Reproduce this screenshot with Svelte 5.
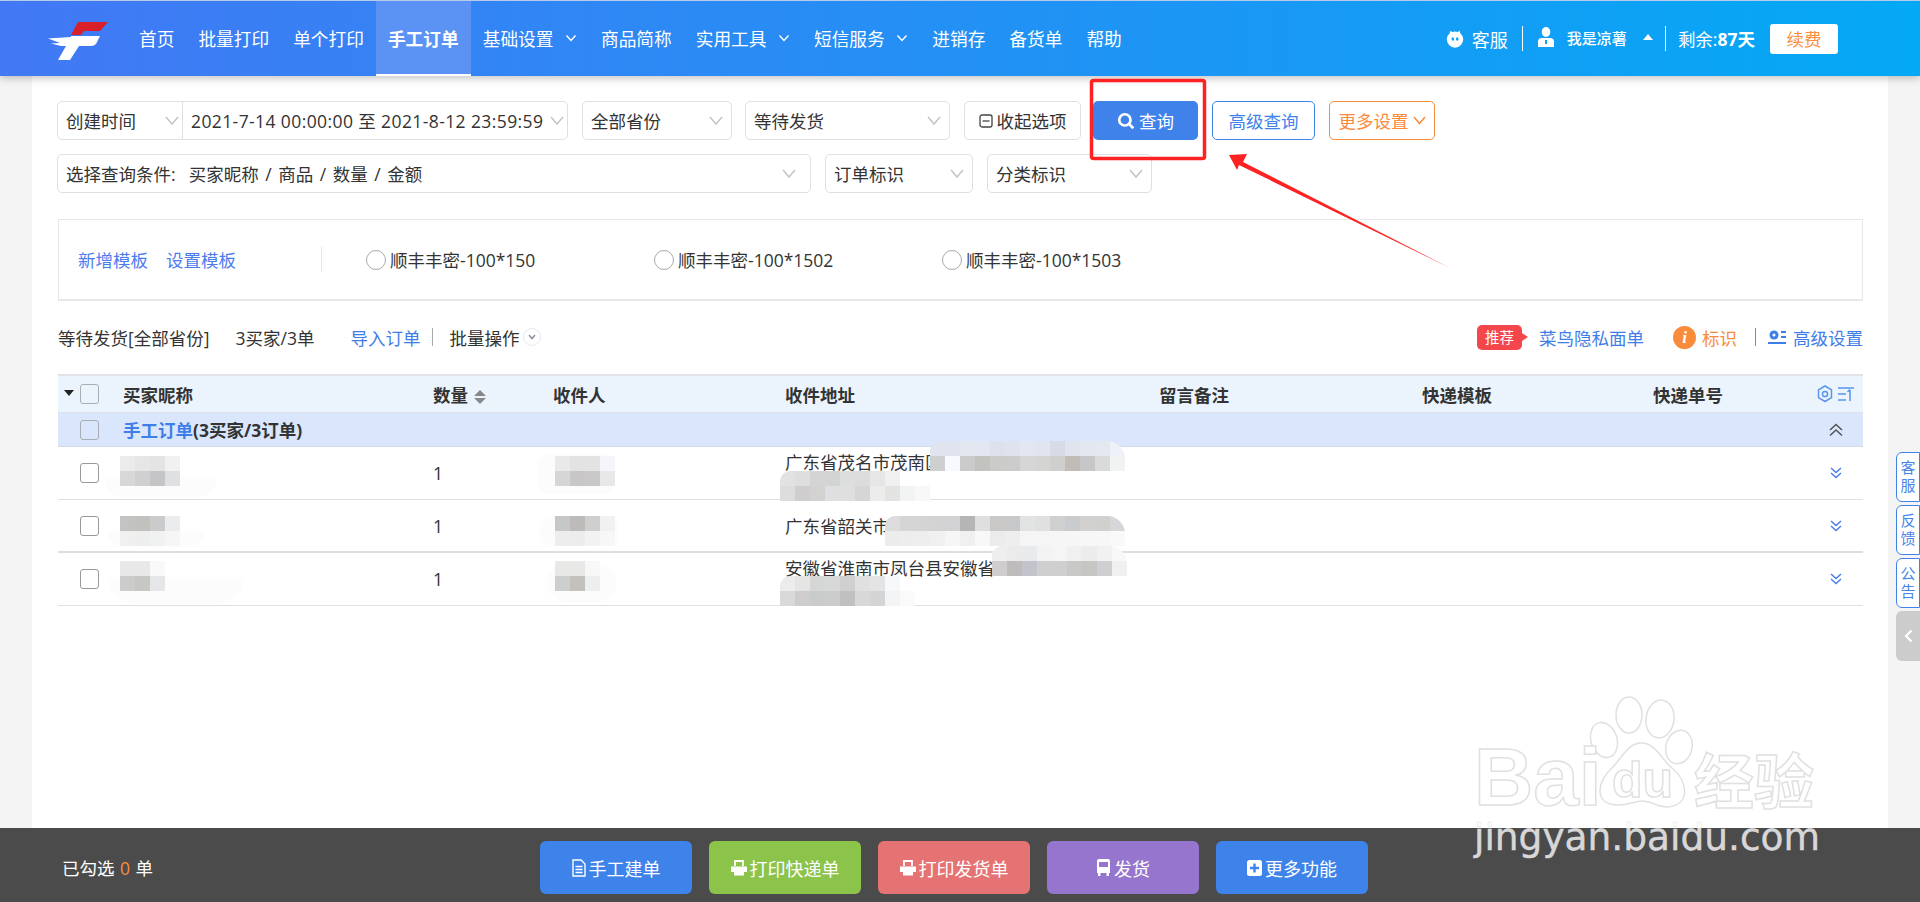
<script>
  const nav = [
    { label: "首页" },
    { label: "批量打印" },
    { label: "单个打印" },
    { label: "手工订单", active: true },
    { label: "基础设置", more: true },
    { label: "商品简称" },
    { label: "实用工具", more: true },
    { label: "短信服务", more: true },
    { label: "进销存" },
    { label: "备货单" },
    { label: "帮助" }
  ];

  const templates = ["顺丰丰密-100*150", "顺丰丰密-100*1502", "顺丰丰密-100*1503"];

  const columns = ["买家昵称", "数量", "收件人", "收件地址", "留言备注", "快递模板", "快递单号"];

  const rows = [
    { addr: "广东省茂名市茂南区", tall: true },
    { addr: "广东省韶关市" },
    { addr: "安徽省淮南市凤台县安徽省", tall: true }
  ];

  // faint smudges left round the pixelated blocks
  const smudges = [
    { x: 46, y: 30, w: 113, h: 20, r: "0 0 40px 40px" },
    { x: 50, y: 84, w: 96, h: 16, r: "0 0 16px 16px" },
    { x: 50, y: 130, w: 136, h: 27, r: "0 0 30px 30px" },
    { x: 479, y: 7, w: 78, h: 40, r: "14px" },
    { x: 482, y: 69, w: 78, h: 30, r: "10px" },
    { x: 489, y: 117, w: 70, h: 38, r: "20px" }
  ];

  // pixelated privacy blocks, x/y relative to the table body
  const mosaics = [
    { x: 62, y: 9, cells: [["#ebebeb", "#e6e6e6", "#e4e4e4", "#f1f1f1"], ["#d7d7d5", "#d0d0d0", "#c5c5c7", "#dfe0e2"]] },
    { x: 62, y: 69, cells: [["#c3c3c1", "#c2c1be", "#cbcbcb", "#ebecee"], ["#f0f0ef", "#eeeeee", "#f0f1f1", "#f6f6f6"]] },
    { x: 62, y: 114, cells: [["#e9e8e8", "#e8e8e7", "#f9f9f9"], ["#ccccca", "#c7c7c4", "#e5e6e8"]] },
    { x: 497, y: 9, cells: [["#e9e9e9", "#e3e3e3", "#e3e3e3", "#f4f6f9"], ["#d6d6d6", "#c8c6c6", "#c8c8c8", "#e8e8e8"]] },
    { x: 497, y: 69, cells: [["#c6c7c7", "#bdbbb9", "#cfcfcf", "#f0f1f3"], ["#ededed", "#ececec", "#f2f2f2", "#f6f7f7"]] },
    { x: 497, y: 114, cells: [["#e8e8e6", "#e8e8e6", "#f8f8f8"], ["#cdcfce", "#c2c1be", "#eceef0"]] },
    {
      x: 872, y: -6, round: true,
      cells: [
        ["#e0e4ee", "#e0e4ee", "#e2e6ef", "#e2e6f0", "#dde1ec", "#dfe3ed", "#e3e7f1", "#e1e5ef", "#d6dbe7", "#e0e4ee", "#e2e6ef", "#e4e8f1", "#eef1f8"],
        ["#cfcfcf", "#f6fafe", "#cbcbcb", "#c2c2be", "#cbcbca", "#cbcccb", "#d6d6d6", "#d4d4d2", "#cfd0ce", "#bfbdb6", "#c7c7ca", "#d9dbda", "#f0f3f2"]
      ]
    },
    {
      x: 722, y: 24, round: true,
      cells: [
        ["#e2e2e2", "#dedede", "#d4d4d4", "#d2d4d4", "#dcdddd", "#dcdcdc", "#e6e6e6", "#f0f0f0", "#fff", "#fff"],
        ["#dddddd", "#cfcdcd", "#d2d2d1", "#dedfe0", "#dfdfdf", "#d6d6d6", "#ececec", "#e3e4e2", "#f2f3f3", "#f8f8f8"]
      ]
    },
    {
      x: 827, y: 69, round: true,
      cells: [
        ["#dcdcdc", "#d5d5d5", "#d4d4d4", "#d3d3d3", "#d2d2d4", "#b5b5b5", "#dfdfdf", "#c9c8c7", "#c7c8ca", "#e2e4e4", "#e0e0e0", "#cfd0d0", "#c9cbce", "#d2d1cf", "#d0d0ce", "#d6d7d9"],
        ["#ececec", "#ededed", "#eeeeee", "#f0f0f0", "#f6f6f6", "#f0f0f0", "#f8f8f8", "#ebebeb", "#eeeeee", "#f5f5f5", "#f5f5f5", "#f6f6f6", "#f6f6f6", "#f7f7f7", "#f7f7f7", "#f9f9f9"]
      ]
    },
    {
      x: 934, y: 99, round: true,
      cells: [
        ["#efeeee", "#ebebeb", "#e9eaec", "#f3f3f3", "#f5f5f5", "#f0f0f0", "#ececec", "#f1f1f1", "#f8f8f8"],
        ["#cfcdcd", "#bfbcbd", "#c3c3cb", "#cfcfcf", "#cfcfcf", "#c8c8c6", "#c6c6c4", "#cfcfd1", "#eff1f1"]
      ]
    },
    {
      x: 722, y: 129, round: true,
      cells: [
        ["#ececec", "#e5e5e4", "#d5d7d6", "#d8d8d6", "#d0d0d0", "#e0e0e0", "#e4e4e4", "#f6f8fa", "#fff"],
        ["#d9d9d9", "#cecccc", "#cacccb", "#cccccc", "#bfc0c2", "#d8d8d8", "#d4d4d4", "#f2f4f6", "#fafafa"]
      ]
    }
  ];

  const actions = [
    { label: "手工建单", tone: "blue", icon: "doc" },
    { label: "打印快递单", tone: "green", icon: "print" },
    { label: "打印发货单", tone: "red", icon: "print" },
    { label: "发货", tone: "purple", icon: "bus" },
    { label: "更多功能", tone: "blue", icon: "plus" }
  ];
</script>

<div class="page">
  <header class="topbar">
    <svg class="logo" width="62" height="40" viewBox="0 0 62 40">
      <path d="M31 0H61L53 9H37L34 13H24Z" fill="#d9202a" />
      <path d="M24 14H53L49 22Q47 24 44 24H32L23 38H11L19 24H14L4 21.5L13 21L1 16.5L24 15Z" fill="#fff" />
    </svg>
    <nav class="nav">
      {#each nav as item}
        <a class="nav-item" class:active={item.active}>
          {item.label}
          {#if item.more}
            <svg class="nav-caret" width="12" height="8" viewBox="0 0 12 8"><path d="M1.5 1.5 6 6.5l4.5-5" fill="none" stroke="#fff" stroke-width="1.4" /></svg>
          {/if}
        </a>
      {/each}
    </nav>
    <div class="account">
      <svg width="18" height="18" viewBox="0 0 18 18">
        <path d="M9 1.500c1 0 2 .2 2.800.5L13.500.8l.8 2.400A8.200 8.200 0 1 1 3.700 3.200L4.500.8 6.200 2C7 1.700 8 1.500 9 1.500Z" fill="#fff" />
        <ellipse cx="6.800" cy="9" rx="1.300" ry="1.800" fill="#0ba4f4" /><ellipse cx="11.200" cy="9" rx="1.300" ry="1.800" fill="#0ba4f4" />
      </svg>
      <span class="kefu">客服</span>
      <i class="vline"></i>
      <svg class="person" width="16" height="20" viewBox="0 0 16 20">
        <ellipse cx="8" cy="5" rx="4.300" ry="5" fill="#fff" />
        <path d="M0 20v-5.500Q0 11 4 11h8q4 0 4 3.500V20Z" fill="#fff" />
        <path d="M7 13h2v4H7Z" fill="#0ba4f4" />
      </svg>
      <span class="uname">我是凉薯</span>
      <span class="up-tri"></span>
      <i class="vline second"></i>
      <span class="remain">剩余:<b>87天</b></span>
      <button class="renew">续费</button>
    </div>
  </header>

  <main class="main">
    <div class="filters">
      <div class="select date">
        <span class="date-type">创建时间
          <svg class="caret" width="14" height="9" viewBox="0 0 14 9"><path d="M1 1l6 7 6-7" fill="none" stroke="#c4c4c4" stroke-width="1.500" /></svg>
        </span>
        <span class="date-range">2021-7-14 00:00:00 至 2021-8-12 23:59:59
          <svg class="caret" width="14" height="9" viewBox="0 0 14 9"><path d="M1 1l6 7 6-7" fill="none" stroke="#c4c4c4" stroke-width="1.500" /></svg>
        </span>
      </div>
      <div class="select w150">全部省份<svg class="caret" width="14" height="9" viewBox="0 0 14 9"><path d="M1 1l6 7 6-7" fill="none" stroke="#c4c4c4" stroke-width="1.500" /></svg></div>
      <div class="select w205">等待发货<svg class="caret" width="14" height="9" viewBox="0 0 14 9"><path d="M1 1l6 7 6-7" fill="none" stroke="#c4c4c4" stroke-width="1.500" /></svg></div>
      <button class="btn collapse">
        <svg width="14" height="14" viewBox="0 0 14 14"><rect x="1" y="1" width="12" height="12" rx="2" fill="none" stroke="#444" stroke-width="1.300" /><path d="M3.500 7h7" stroke="#444" stroke-width="1.300" /></svg>
        收起选项
      </button>
      <button class="btn primary">
        <svg width="18" height="18" viewBox="0 0 16 16"><circle cx="7" cy="7" r="5" fill="none" stroke="#fff" stroke-width="2.400" /><path d="M10.500 10.500 14.500 14.500" stroke="#fff" stroke-width="2.400" /></svg>
        查询
      </button>
      <button class="btn outline">高级查询</button>
      <button class="btn orange">更多设置<svg width="13" height="9" viewBox="0 0 13 9"><path d="M1 1l5.500 6.500L12 1" fill="none" stroke="#f98c3a" stroke-width="1.500" /></svg></button>
    </div>
    <div class="filters second-row">
      <div class="select w753">选择查询条件:&nbsp; 买家昵称 / 商品 / 数量 / 金额<svg class="caret" width="14" height="9" viewBox="0 0 14 9"><path d="M1 1l6 7 6-7" fill="none" stroke="#c4c4c4" stroke-width="1.500" /></svg></div>
      <div class="select w148">订单标识<svg class="caret" width="14" height="9" viewBox="0 0 14 9"><path d="M1 1l6 7 6-7" fill="none" stroke="#c4c4c4" stroke-width="1.500" /></svg></div>
      <div class="select w165">分类标识<svg class="caret" width="14" height="9" viewBox="0 0 14 9"><path d="M1 1l6 7 6-7" fill="none" stroke="#c4c4c4" stroke-width="1.500" /></svg></div>
    </div>

    <section class="templates">
      <div class="tpl-links">
        <a>新增模板</a>
        <a>设置模板</a>
      </div>
      <div class="tpl-list">
        {#each templates as name}
          <label class="radio"><span class="dot"></span>{name}</label>
        {/each}
      </div>
    </section>

    <div class="status">
      <span class="s-where">等待发货[全部省份]</span>
      <span class="s-count">3买家/3单</span>
      <a class="s-import">导入订单</a>
      <i class="s-sep"></i>
      <span class="s-batch">批量操作</span>
      <span class="s-chev"><svg width="8" height="6" viewBox="0 0 8 6"><path d="M1 1l3 3.500L7 1" fill="none" stroke="#8a8fa0" stroke-width="1.500" /></svg></span>
      <div class="s-right">
        <span class="badge">推荐</span>
        <a class="s-cainiao">菜鸟隐私面单</a>
        <span class="info">i</span>
        <a class="s-mark">标识</a>
        <i class="s-sep dark"></i>
        <svg class="s-cog" width="18" height="16" viewBox="0 0 18 16">
          <circle cx="6" cy="6" r="4.500" fill="#3f7ee8" /><circle cx="6" cy="6" r="1.500" fill="#fff" />
          <path d="M0 14h18M13 3h5M13 8h5" stroke="#3f7ee8" stroke-width="2" />
        </svg>
        <a class="s-adv">高级设置</a>
      </div>
    </div>

    <div class="table">
      <div class="grid thead">
        <div class="check-cell">
          <span class="tri"></span>
          <span class="box"></span>
        </div>
        {#each columns as col, i}
          <div>
            {col}
            {#if i === 1}
              <span class="sort"><i class="s-up"></i><i class="s-down"></i></span>
            {/if}
          </div>
        {/each}
        <div class="head-tools">
          <svg width="18" height="18" viewBox="0 0 18 18"><path d="M9 1l6.500 3.800v7.900L9 16.500 2.500 12.700V4.800Z" fill="none" stroke="#5a93ea" stroke-width="1.500" stroke-linejoin="round" /><circle cx="9" cy="9" r="2.600" fill="none" stroke="#5a93ea" stroke-width="1.500" /></svg>
          <svg width="16" height="16" viewBox="0 0 16 16"><path d="M0 2h16M0 8h8M0 14h8M12 15V4M9.500 6 12 3.500" fill="none" stroke="#5a93ea" stroke-width="1.500" /></svg>
        </div>
      </div>
      <div class="grid group">
        <div class="check-cell"><span class="box"></span></div>
        <div class="group-title"><span>手工订单</span>(3买家/3订单)</div>
        <div class="group-fold">
          <svg width="16" height="14" viewBox="0 0 16 14"><path d="M2 7l6-5.500L14 7M2 12.500 8 7l6 5.500" fill="none" stroke="#555" stroke-width="1.600" /></svg>
        </div>
      </div>
      <div class="tbody">
        {#each rows as row, i}
          <div class="grid trow" class:thick={i === 1}>
            <div class="check-cell"><span class="box"></span></div>
            <div></div>
            <div>1</div>
            <div></div>
            <div class="addr" class:tall={row.tall}>{row.addr}</div>
            <div></div>
            <div></div>
            <div></div>
            <div class="row-fold">
              <svg width="12" height="12" viewBox="0 0 12 12"><path d="M1 1l5 4.500L11 1M1 6l5 4.500L11 6" fill="none" stroke="#4d7cf0" stroke-width="1.500" /></svg>
            </div>
          </div>
        {/each}
        {#each smudges as s}
          <div class="smudge" style="left:{s.x}px;top:{s.y}px;width:{s.w}px;height:{s.h}px;border-radius:{s.r}"></div>
        {/each}
        {#each mosaics as m}
          <div class="mosaic" class:round={m.round} style="left:{m.x}px;top:{m.y}px">
            {#each m.cells as line}
              <div class="mosaic-line">
                {#each line as c}<i style="background:{c}"></i>{/each}
              </div>
            {/each}
          </div>
        {/each}
      </div>
    </div>
  </main>

  <footer class="footer">
    <div class="picked">已勾选 <b>0</b> 单</div>
    <div class="actions">
      {#each actions as a}
        <button class="action {a.tone}">
          {#if a.icon === "doc"}
            <svg width="14" height="18" viewBox="0 0 14 18"><path d="M1 1h8l4 4v12H1Z" fill="none" stroke="#fff" stroke-width="1.400" /><path d="M3.500 7.500h7M3.500 10.500h7M3.500 13.500h7" stroke="#fff" stroke-width="1.600" /></svg>
          {:else if a.icon === "print"}
            <svg width="16" height="16" viewBox="0 0 16 16"><path d="M4 6V1h8v5" fill="none" stroke="#fff" stroke-width="1.800" /><path d="M0 6.500h16V12h-3v3.500H3V12H0Z" fill="#fff" /></svg>
          {:else if a.icon === "bus"}
            <svg width="15" height="19" viewBox="0 0 15 19"><path d="M1 3Q1 1 3 1h9q2 0 2 2v12H1Z" fill="#fff" /><path d="M3 4h9v5H3Z" fill="#9575cd" /><path d="M2 15h2.500v3H2ZM10.500 15H13v3h-2.500Z" fill="#fff" /></svg>
          {:else}
            <svg width="15" height="16" viewBox="0 0 15 16"><rect width="15" height="16" rx="2.500" fill="#fff" /><path d="M7.500 3.500v9M3 8h9" stroke="#3e83ea" stroke-width="2.400" /></svg>
          {/if}
          {a.label}
        </button>
      {/each}
    </div>
  </footer>

  <aside class="side">
    <a>客<br />服</a>
    <a>反<br />馈</a>
    <a>公<br />告</a>
    <span class="side-toggle"><svg width="9" height="14" viewBox="0 0 9 14"><path d="M7.500 1.500 2 7l5.500 5.500" fill="none" stroke="#fff" stroke-width="2.200" /></svg></span>
  </aside>

  <!-- red annotation drawn over the query button -->
  <svg class="mark" width="1920" height="902" viewBox="0 0 1920 902">
    <rect x="1091.500" y="80.500" width="113" height="78" rx="2" fill="none" stroke="#fe2222" stroke-width="3.500" />
    <path d="M1229 155 1247 154 1243 162 1450 268 1239 165 1237 170Z" fill="#fe2222" />
  </svg>

  <!-- watermark -->
  <svg class="mark" width="1920" height="902" viewBox="0 0 1920 902">
    <g fill="#fff" fill-opacity="0.7" stroke="#e0e0e0" stroke-width="1.500">
      <ellipse cx="1604" cy="740" rx="13" ry="18" transform="rotate(-18 1604 740)" />
      <ellipse cx="1629" cy="715" rx="13" ry="18" />
      <ellipse cx="1660" cy="719" rx="14" ry="19" transform="rotate(8 1660 719)" />
      <ellipse cx="1679" cy="747" rx="13" ry="17" transform="rotate(14 1679 747)" />
      <path d="M1641 743C1628 743 1622 758 1612 768 1596 782 1594 805 1618 805 1630 805 1634 801 1642 801 1652 801 1656 807 1668 807 1690 805 1689 782 1672 768 1660 758 1656 743 1641 743Z" />
    </g>
    <g font-family="'Liberation Sans', sans-serif" font-weight="700" fill="#fff" stroke="#e0e0e0" stroke-width="1.500">
      <text x="1474" y="805" font-size="82">Bai</text>
      <text x="1612" y="797" font-size="50">du</text>
      <text x="1694" y="804" font-size="60" font-family="'Noto Sans CJK SC', sans-serif">经验</text>
    </g>
    <text x="1474" y="850" font-size="37.500" font-family="'DejaVu Sans', sans-serif" fill="#fff" fill-opacity="0.8" stroke="#dcdcdc" stroke-width="0.400">jingyan.baidu.com</text>
  </svg>
</div>

<style>
  :global(body) {
    margin: 0;
    background: #f4f4f4;
  }
  .page {
    position: relative;
    display: flex;
    flex-direction: column;
    height: 902px;
    overflow: hidden;
    font-family: "Open Sans", "Noto Sans CJK SC", sans-serif;
    font-size: 17.500px;
    color: #333;
  }
  a {
    text-decoration: none;
    cursor: pointer;
  }
  button {
    font: inherit;
    cursor: pointer;
  }
  i {
    font-style: normal;
  }

  .topbar {
    position: relative;
    z-index: 2;
    flex: none;
    display: flex;
    align-items: stretch;
    box-sizing: border-box;
    height: 76px;
    padding-left: 47px;
    background: linear-gradient(90deg, #4278f4, #04a9f5);
    border-top: 1px solid #b9cbea;
    box-shadow: 0 2px 8px rgba(0, 0, 0, 0.25);
    color: #fff;
  }
  .logo {
    margin: 21px 18px 0 0;
    flex: none;
  }
  .nav {
    display: flex;
    font-size: 17.700px;
  }
  .nav-item {
    display: flex;
    align-items: center;
    box-sizing: border-box;
    padding: 0 12px 2px;
    color: #fff;
    white-space: nowrap;
  }
  .nav-item.active {
    background: #5b93f5;
    border-bottom: 2px solid #fff;
    padding-bottom: 0;
    font-weight: 700;
  }
  .nav-caret {
    margin-left: 11.500px;
  }
  .account {
    display: flex;
    align-items: center;
    margin-left: auto;
    padding-right: 82px;
  }
  .kefu {
    margin-left: 8px;
    font-size: 18px;
  }
  .vline {
    width: 1px;
    height: 25px;
    background: #fff;
    margin: 0 15px 0 14px;
  }
  .vline.second {
    margin: 0 12px;
  }
  .person {
    margin-bottom: 4px;
  }
  .uname {
    margin-left: 13px;
    font-size: 15px;
    font-weight: 500;
    margin-bottom: 3px;
  }
  .up-tri {
    width: 0;
    height: 0;
    margin: 0 0 4px 16px;
    border: 5.500px solid transparent;
    border-top: 0;
    border-bottom: 6px solid #fff;
  }
  .remain {
    white-space: nowrap;
  }
  .remain b {
    font-weight: 700;
  }
  .renew {
    width: 68px;
    height: 30px;
    margin-left: 15px;
    padding: 0;
    border: 0;
    border-radius: 3px;
    background: #fff;
    color: #f9913c;
  }

  .main {
    flex: 1;
    min-height: 0;
    margin: 0 32px;
    padding: 25px 25px 0 26px;
    background: #fff;
  }
  .filters {
    display: flex;
    gap: 14px;
    height: 39px;
    margin-left: -1px;
  }
  .second-row {
    margin-top: 14px;
  }
  .select {
    display: flex;
    align-items: center;
    justify-content: space-between;
    box-sizing: border-box;
    padding: 0 8px;
    border: 1px solid #e0e0e0;
    border-radius: 5px;
    background: #fff;
    white-space: nowrap;
  }
  .caret {
    flex: none;
  }
  .date {
    width: 511px;
    padding: 0;
  }
  .date-type,
  .date-range {
    display: flex;
    align-items: center;
    justify-content: space-between;
    box-sizing: border-box;
    height: 100%;
  }
  .date-type {
    width: 125px;
    padding: 0 3px 0 8px;
    border-right: 1px solid #e0e0e0;
  }
  .date-range {
    flex: 1;
    padding: 0 3px 0 8px;
    letter-spacing: 0.400px;
  }
  .w150 { width: 150px; }
  .w205 { width: 205px; margin-left: -1px; }
  .w753 { width: 754px; padding-right: 14px; word-spacing: 2px; }
  .w148 { width: 148px; }
  .w165 { width: 165px; }

  .btn {
    display: flex;
    align-items: center;
    justify-content: center;
    gap: 4px;
    box-sizing: border-box;
    height: 39px;
    padding: 0;
    border-radius: 5px;
    background: #fff;
    white-space: nowrap;
  }
  .collapse {
    width: 117px;
    border: 1px solid #e0e0e0;
    color: #333;
  }
  .primary {
    width: 105px;
    margin-left: -2px;
    border: 0;
    background: #3f83ea;
    color: #fff;
  }
  .outline {
    width: 103px;
    border: 1px solid #3f83ea;
    color: #3f83ea;
  }
  .orange {
    width: 106px;
    border: 1px solid #f98c3a;
    color: #f98c3a;
  }

  .templates {
    display: flex;
    align-items: center;
    box-sizing: border-box;
    height: 82px;
    margin-top: 26px;
    padding-left: 19px;
    border: 1px solid #e5e9ec;
    border-bottom-width: 2px;
  }
  .tpl-links {
    display: flex;
    gap: 18px;
    width: 243px;
    height: 25px;
    align-items: center;
    box-sizing: content-box;
    border-right: 1px solid #e6e6e6;
  }
  .tpl-links a {
    color: #4d7cf0;
  }
  .tpl-list {
    display: flex;
    margin-left: 44px;
  }
  .radio {
    display: flex;
    align-items: center;
    gap: 4px;
    width: 288px;
    white-space: nowrap;
  }
  .dot {
    width: 18px;
    height: 18px;
    border: 1px solid #aaa;
    border-radius: 50%;
  }

  .status {
    display: flex;
    align-items: center;
    height: 30px;
    margin-top: 21px;
  }
  .s-count {
    margin-left: 26px;
  }
  .s-import {
    margin-left: 36px;
    color: #3f7ee8;
  }
  .s-sep {
    width: 1px;
    height: 18px;
    margin: 0 16px 0 12px;
    background: #aaa;
  }
  .s-chev {
    display: flex;
    align-items: center;
    justify-content: center;
    width: 16px;
    height: 16px;
    margin-left: 4px;
    border: 1px solid #e6e8f0;
    border-radius: 50%;
  }
  .s-right {
    display: flex;
    align-items: center;
    margin-left: auto;
  }
  .badge {
    position: relative;
    display: block;
    width: 45px;
    height: 25px;
    border-radius: 5px;
    background: #f4474c;
    color: #fff;
    font-size: 14.500px;
    line-height: 25px;
    text-align: center;
  }
  .badge::after {
    content: "";
    position: absolute;
    left: 100%;
    top: 8px;
    border: 4px solid transparent;
    border-left: 6px solid #f4474c;
    border-right: 0;
  }
  .s-cainiao {
    margin-left: 17px;
    color: #3f7ee8;
  }
  .info {
    width: 23px;
    height: 23px;
    margin-left: 29px;
    border-radius: 50%;
    background: #f98c3a;
    color: #fff;
    font: italic 700 17px/23px "Liberation Serif", serif;
    text-align: center;
  }
  .s-mark {
    margin-left: 6px;
    color: #f98c3a;
  }
  .s-sep.dark {
    margin: 0 12px 0 18px;
    background: #888;
  }
  .s-adv {
    margin-left: 7px;
    color: #3f7ee8;
  }

  .table {
    margin-top: 22px;
  }
  .grid {
    display: grid;
    grid-template-columns: 65px 310px 120px 232px 374px 263px 231px 1fr 56px;
    align-items: center;
  }
  .thead {
    height: 39px;
    background: #ebf4fc;
    border-top: 2px solid #e0e4e8;
    border-bottom: 1px solid #dde1e6;
    font-weight: 700;
    box-sizing: border-box;
  }
  .check-cell {
    position: relative;
    display: flex;
    padding-left: 22px;
  }
  .box {
    box-sizing: border-box;
    width: 19px;
    height: 20px;
    border: 1px solid #999;
    border-radius: 3px;
    background: #fff;
  }
  .thead .box,
  .group .box {
    border-color: #a9aeb4;
    background: transparent;
  }
  .tri {
    position: absolute;
    left: 6px;
    top: 6px;
    border: 5px solid transparent;
    border-top: 6px solid #222;
    border-bottom: 0;
  }
  .sort {
    display: inline-flex;
    flex-direction: column;
    gap: 2px;
    vertical-align: middle;
    margin-left: 1px;
  }
  .s-up,
  .s-down {
    width: 0;
    height: 0;
    border: 6px solid transparent;
  }
  .s-up {
    border-top: 0;
    border-bottom: 6px solid #888;
  }
  .s-down {
    border-bottom: 0;
    border-top: 6px solid #888;
  }
  .head-tools {
    display: flex;
    align-items: center;
    gap: 4px;
    padding-left: 9px;
  }
  .group {
    height: 34px;
    grid-template-columns: 65px 1fr 56px;
    background: #d9e6fb;
    border-bottom: 1px solid #d5dbe6;
    box-sizing: border-box;
    font-weight: 700;
  }
  .group-title span {
    color: #3f7ee8;
  }
  .group-fold {
    display: flex;
    padding-left: 21px;
  }
  .tbody {
    position: relative;
  }
  .trow {
    box-sizing: border-box;
    height: 53px;
    border-bottom: 1px solid #e0e0e0;
  }
  .trow.thick {
    border-bottom: 2px solid #dedede;
  }
  .addr.tall {
    align-self: start;
    padding-top: 3px;
    line-height: 24px;
  }
  .row-fold {
    display: flex;
    padding-left: 23px;
  }
  .smudge {
    position: absolute;
    background: #fcfcfc;
  }
  .mosaic {
    position: absolute;
  }
  .mosaic.round {
    border-radius: 10px 18px 0 0;
    overflow: hidden;
  }
  .mosaic-line {
    display: flex;
  }
  .mosaic-line i {
    display: block;
    width: 15px;
    height: 15px;
  }

  .footer {
    position: relative;
    z-index: 1;
    flex: none;
    display: flex;
    align-items: flex-start;
    height: 74px;
    background: #4b4b4b;
    color: #fff;
  }
  .picked {
    margin: 27px 0 0 62px;
    width: 478px;
    white-space: nowrap;
    word-spacing: 1px;
  }
  .picked b {
    font-weight: 400;
    color: #f98c3a;
  }
  .actions {
    display: flex;
    gap: 17px;
    margin-top: 13px;
    font-size: 18px;
  }
  .action {
    display: flex;
    align-items: center;
    justify-content: center;
    gap: 3px;
    width: 152px;
    height: 53px;
    padding: 0;
    border: 0;
    border-radius: 6px;
    color: #fff;
    white-space: nowrap;
  }
  .blue { background: #3e83ea; }
  .green { background: #8cc34a; }
  .red { background: #e57373; }
  .purple { background: #9575cd; }

  .side {
    position: absolute;
    right: 0;
    top: 452px;
    z-index: 3;
    display: flex;
    flex-direction: column;
    gap: 3px;
    width: 24px;
  }
  .side a {
    box-sizing: border-box;
    height: 50px;
    border: 1px solid #3f83ea;
    border-radius: 6px 0 0 6px;
    background: #fff;
    color: #4a86e8;
    font-size: 15px;
    line-height: 18px;
    text-align: center;
    padding-top: 5px;
  }
  .side-toggle {
    display: flex;
    align-items: center;
    justify-content: center;
    height: 50px;
    border-radius: 6px 0 0 6px;
    background: #ccc;
  }
  .mark {
    position: absolute;
    left: 0;
    top: 0;
    z-index: 4;
    pointer-events: none;
  }
</style>
